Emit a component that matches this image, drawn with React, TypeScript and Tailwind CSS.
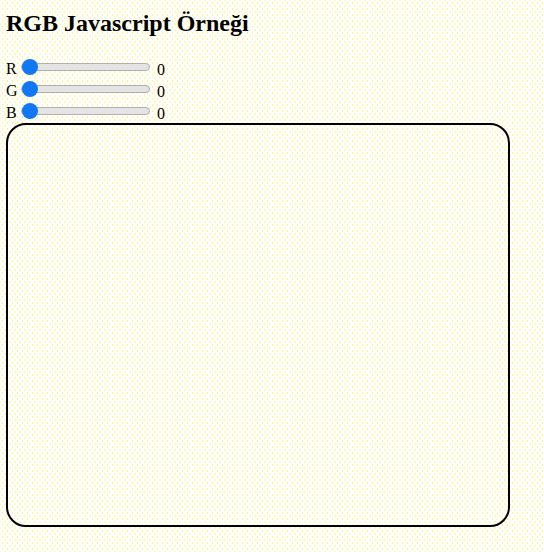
const channels = ['R', 'G', 'B'];

export default function App() {
  return (
    <div className="min-h-[552px] w-full bg-white bg-[radial-gradient(circle,#fff37a_0.5px,transparent_0.9px),radial-gradient(circle,#fff37a_0.5px,transparent_0.9px)] bg-[length:5px_6px] bg-[position:0_0,2.5px_3px] pl-[6px] pb-[20px] pt-[9px] font-['Liberation_Serif',serif] text-black">
      <h2 className="text-[24px] font-bold leading-[28px]">RGB Javascript Örneği</h2>

      <div className="mt-[19px] flex flex-col">
        {channels.map((c) => (
          <div key={c} className="flex h-[22px] items-center text-[16px]">
            <span className="w-[15px] pt-[3px] leading-[18px]">{c}</span>
            <input
              type="range"
              min={0}
              max={255}
              defaultValue={0}
              className="m-0 h-[8px] w-[129px] cursor-pointer appearance-none rounded-full border border-[#b0b0b0] bg-[#e4e4e4] [&::-webkit-slider-thumb]:h-[16px] [&::-webkit-slider-thumb]:w-[16px] [&::-webkit-slider-thumb]:appearance-none [&::-webkit-slider-thumb]:rounded-full [&::-webkit-slider-thumb]:bg-[#0f78f2]"
            />
            <span className="ml-[7px] pt-[5px] leading-[18px]">0</span>
          </div>
        ))}
      </div>

      <div className="mt-[1px] box-border h-[404px] w-[504px] rounded-[20px] border-2 border-black" />
    </div>
  );
}
